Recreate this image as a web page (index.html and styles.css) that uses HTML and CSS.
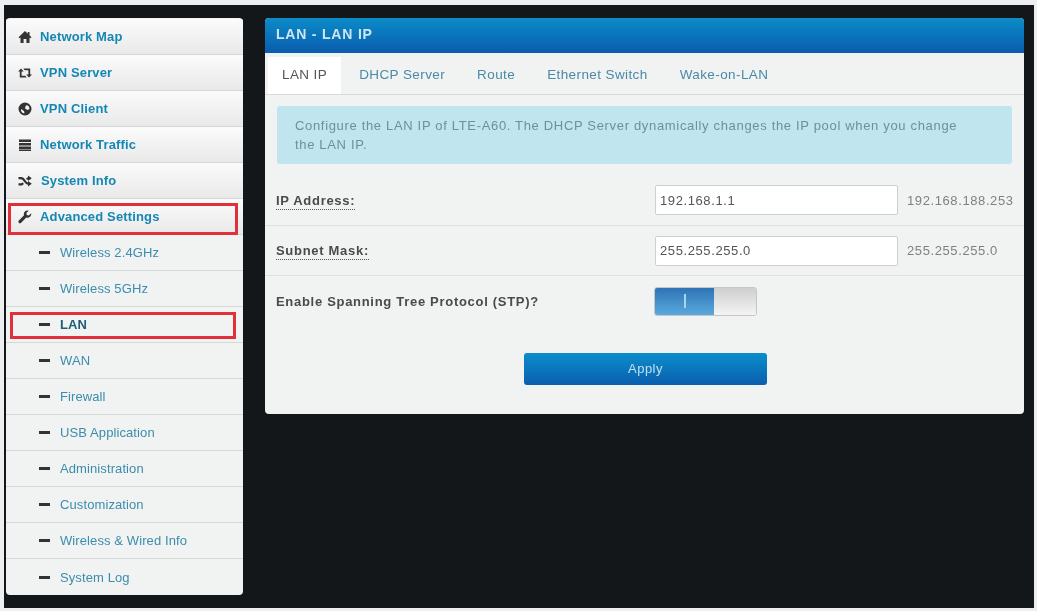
FILE: index.html
```html
<!DOCTYPE html>
<html lang="en">
  <head>
    <meta charset="utf-8">
    <title>LAN - LAN IP</title>
    <link rel="stylesheet" href="styles.css">
  </head>
  <body>
    <div class="desk">
      <ul class="menu">
        <li class="top"><svg class="ico" viewBox="0 0 14 14"><path d="M7 1 0.5 7.2 1.6 8.3 2.5 7.5V13H5.6V9H8.4V13H11.5V7.5L12.4 8.3 13.5 7.2 11.5 5.3V2H9.8V3.7Z"/></svg><a>Network Map</a></li>
        <li class="top"><svg class="ico" viewBox="0 0 14 14"><path d="M3 2.5 0 5.5H1.8V11.5H8.8L7.2 9.8H3.6V5.5H5.8ZM5.2 2.5 6.8 4.2H10.4V8.5H8.2L11 11.5 14 8.5H12.2V2.5Z"/></svg><a>VPN Server</a></li>
        <li class="top"><svg class="ico" viewBox="0 0 14 14"><path fill-rule="evenodd" d="M7 .5a6.5 6.5 0 1 0 0 13 6.5 6.5 0 0 0 0-13ZM8.5 3 11 4.5 11.5 7 9.5 8 7 6.5 7.5 4.5ZM3 7 6 9 6.5 11.5 4.5 11 3 9Z"/></svg><a>VPN Client</a></li>
        <li class="top"><svg class="ico" viewBox="0 0 14 14"><path d="M1 1.5H13V4H1ZM1 5H13V7.5H1ZM1 8.5H13V11H1ZM1 11.5H13V13H1Z"/></svg><a>Network Traffic</a></li>
        <li class="top"><svg class="ico" viewBox="0 0 14 14"><path d="M0.5 3H3.3C5 3 6 4.2 7 5.5 7.8 6.6 8.6 7.9 10 8.6V7L13.8 9.8 10 12.5V10.8C8 10.4 6.8 8.9 5.8 7.6 5 6.5 4.2 5.2 3 5.2H.5ZM.5 9.2H3C3.7 9.2 4.3 8.8 4.7 8.3L5.9 9.9C5.2 10.7 4.2 11.4 3.2 11.4H.5ZM8 4.6C8.6 4 9.2 3.5 10 3.3V1.5L13.8 4.2 10 7V5.4C9.7 5.5 9.4 5.8 9.2 6.1Z"/></svg><a class="nudge">System Info</a></li>
        <li class="top marked"><svg class="ico" viewBox="0 0 14 14"><path d="M13.2 3.2 10.8 5.4 8.8 5 8.4 3.1 10.7.8C9.2.2 7.6.6 6.7 1.7 5.8 2.7 5.6 4 6 5.2L.9 10.6C.2 11.3.3 12.3.9 12.9 1.5 13.5 2.5 13.5 3.1 12.8L8.3 7.6C9.6 8 11 7.7 12 6.8 13 5.7 13.4 4.4 13.2 3.2Z"/></svg><a>Advanced Settings</a><span class="redbox box-adv"></span></li>
        <li class="sub"><i class="dash"></i><a>Wireless 2.4GHz</a></li>
        <li class="sub"><i class="dash"></i><a>Wireless 5GHz</a></li>
        <li class="sub marked current"><i class="dash"></i><a>LAN</a><span class="redbox box-lan"></span></li>
        <li class="sub"><i class="dash"></i><a>WAN</a></li>
        <li class="sub"><i class="dash"></i><a>Firewall</a></li>
        <li class="sub"><i class="dash"></i><a>USB Application</a></li>
        <li class="sub"><i class="dash"></i><a>Administration</a></li>
        <li class="sub"><i class="dash"></i><a>Customization</a></li>
        <li class="sub"><i class="dash"></i><a>Wireless &amp; Wired Info</a></li>
        <li class="sub"><i class="dash"></i><a>System Log</a></li>
      </ul>

      <div class="panel">
        <h2 class="panel-title">LAN - LAN IP</h2>
        <div class="tabs">
          <a class="tab active">LAN IP</a>
          <a class="tab">DHCP Server</a>
          <a class="tab">Route</a>
          <a class="tab">Ethernet Switch</a>
          <a class="tab">Wake-on-LAN</a>
        </div>
        <div class="note">Configure the LAN IP of LTE-A60. The DHCP Server dynamically changes the IP pool when you change the LAN IP.</div>

        <div class="row row-ip">
          <label class="field-name"><span class="tip">IP Address:</span></label>
          <input class="text" type="text" value="192.168.1.1">
          <span class="hint">192.168.188.253</span>
        </div>
        <div class="row row-mask">
          <label class="field-name"><span class="tip">Subnet Mask:</span></label>
          <input class="text" type="text" value="255.255.255.0">
          <span class="hint">255.255.255.0</span>
        </div>
        <div class="row row-stp">
          <label class="field-name">Enable Spanning Tree Protocol (STP)?</label>
          <div class="toggle"><span class="toggle-on"><i></i></span><span class="toggle-off"></span></div>
        </div>
        <div class="actions">
          <button class="apply">Apply</button>
        </div>
      </div>
    </div>
  </body>
</html>
```

FILE: styles.css
```css
html, body {
  margin: 0;
  height: 100%;
}
body {
  background: #eceeef;
  padding: 5px 3px 3px 4px;
  box-sizing: border-box;
  font-family: "Liberation Sans", Arial, sans-serif;
  overflow: hidden;
}
.desk {
  display: flex;
  align-items: flex-start;
  gap: 22px;
  height: 603px;
  padding: 13px 10px 0 2px;
  box-sizing: border-box;
  background: #14171a;
  filter: blur(0.65px);
}

/* left menu */
.menu {
  list-style: none;
  margin: 0;
  padding: 1px 0 0;
  width: 237px;
  flex: none;
  border-radius: 4px;
  overflow: hidden;
  background: #f1f2f2;
}
.menu li {
  position: relative;
  display: flex;
  align-items: center;
  height: 36px;
  box-sizing: border-box;
  border-bottom: 1px solid #d6d8d8;
}
.menu li:last-child {
  border-bottom: 0;
}
.top {
  padding-left: 12px;
  background: linear-gradient(#fbfbfb, #e9e9e9);
}
.top a {
  margin-left: 8px;
  font-size: 13px;
  font-weight: bold;
  letter-spacing: .15px;
  color: #1487b4;
}
.top a.nudge {
  margin-left: 9px;
}
.ico {
  width: 14px;
  height: 14px;
  flex: none;
  fill: #333;
}
.sub {
  padding-left: 33px;
}
.sub a {
  margin-left: 10px;
  font-size: 13px;
  letter-spacing: .1px;
  color: #3b8dad;
}
.sub.current a {
  font-weight: bold;
  color: #1d5f78;
}
.dash {
  width: 11px;
  height: 3px;
  background: #333;
}
.redbox {
  position: absolute;
  border: 3px solid #e0303a;
  box-sizing: border-box;
}
.box-adv {
  left: 2px;
  top: 4px;
  width: 230px;
  height: 32px;
}
.box-lan {
  left: 4px;
  top: 5px;
  width: 226px;
  height: 27px;
}

/* main panel */
.panel {
  flex: 1;
  height: 396px;
  border-radius: 4px;
  background: #f1f2f2;
  overflow: hidden;
}
.panel-title {
  margin: 0;
  height: 35px;
  padding-left: 11px;
  line-height: 33px;
  font-size: 14px;
  letter-spacing: .8px;
  color: #cfe6f2;
  background: linear-gradient(#0b8cc8, #0a5cae);
}
.tabs {
  display: flex;
  height: 42px;
  padding: 4px 0 0 3px;
  box-sizing: border-box;
  border-bottom: 1px solid #d8d9d9;
}
.tab {
  padding: 10px 16px 0;
  font-size: 13.5px;
  letter-spacing: .4px;
  color: #4b8aa6;
}
.tab.active {
  padding: 10px 14px 0;
  margin-right: 2px;
  background: #fff;
  color: #555;
}
.note {
  margin: 11px 12px 0;
  height: 58px;
  padding: 10px 40px 10px 18px;
  box-sizing: border-box;
  border-radius: 3px;
  background: #c0e5ee;
  font-size: 13px;
  line-height: 19px;
  letter-spacing: .67px;
  color: #6f8f9b;
}
.row {
  display: flex;
  align-items: center;
  box-sizing: border-box;
  padding-left: 11px;
  border-bottom: 1px solid #dfe0e0;
}
.row-ip {
  height: 62px;
  padding-top: 11px;
}
.row-mask {
  height: 50px;
}
.row-stp {
  height: 50px;
  border-bottom: 0;
}
.field-name {
  width: 379px;
  font-size: 13px;
  font-weight: bold;
  letter-spacing: .7px;
  color: #4a4a4a;
}
.tip {
  padding-bottom: 1px;
  border-bottom: 1px dotted #555;
}
.text {
  width: 243px;
  height: 30px;
  box-sizing: border-box;
  padding: 0 4px;
  border: 1px solid #cfcfcf;
  border-radius: 2px;
  background: #fff;
  font-family: inherit;
  font-size: 13px;
  letter-spacing: .6px;
  color: #555;
}
.hint {
  margin-left: 9px;
  font-size: 13px;
  letter-spacing: .6px;
  color: #808080;
}
.toggle {
  display: flex;
  width: 103px;
  height: 29px;
  margin-left: -1px;
  border: 1px solid #c6c6c6;
  box-sizing: border-box;
  border-radius: 3px;
  overflow: hidden;
}
.toggle-on {
  display: flex;
  align-items: center;
  justify-content: center;
  width: 59px;
  background: linear-gradient(#2f74b5, #5aa9de);
}
.toggle-on i {
  width: 2px;
  height: 14px;
  background: #a9d4ef;
}
.toggle-off {
  flex: 1;
  background: linear-gradient(#cfcfcf, #f4f4f4);
}
.actions {
  display: flex;
  justify-content: center;
  padding: 27px 0 0 2px;
}
.apply {
  width: 243px;
  height: 32px;
  padding-bottom: 3px;
  border: 0;
  border-radius: 3px;
  background: linear-gradient(#0c8dcb, #0a5fae);
  font-family: inherit;
  font-size: 13px;
  letter-spacing: .5px;
  color: #bfe0f0;
}
```
